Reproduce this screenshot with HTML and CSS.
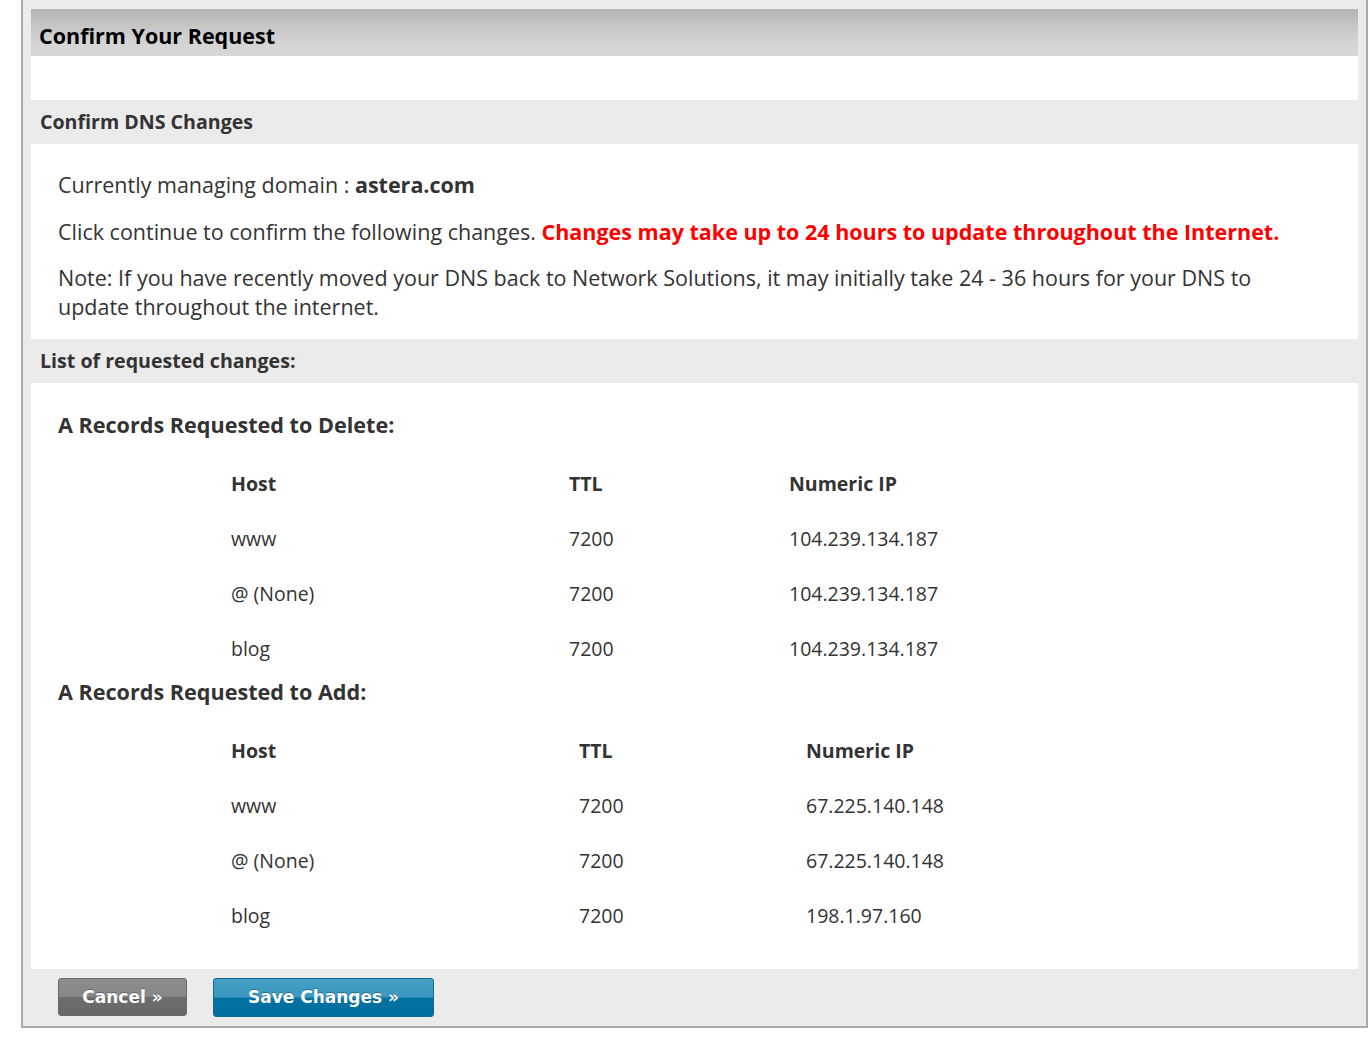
FILE: index.html
```html
<!DOCTYPE html>
<html lang="en">
<head>
<meta charset="utf-8">
<title>Confirm Your Request</title>
<link rel="stylesheet" href="styles.css">
</head>
<body>
<div class="frame">
  <div class="panel">
    <div class="title">Confirm Your Request</div>
    <div class="spacer"></div>
    <div class="bar">Confirm DNS Changes</div>
    <div class="content intro">
      <p>Currently managing domain : <b>astera.com</b></p>
      <p>Click continue to confirm the following changes. <b class="warn">Changes may take up to 24 hours to update throughout the Internet.</b></p>
      <p>Note: If you have recently moved your DNS back to Network Solutions, it may initially take 24 - 36 hours for your DNS to update throughout the internet.</p>
    </div>
    <div class="bar">List of requested changes:</div>
    <div class="content changes">
      <h3 class="rec-title rec-title-first">A Records Requested to Delete:</h3>
      <div class="records rec-del">
        <div class="cell head">Host</div><div class="cell head">TTL</div><div class="cell head">Numeric IP</div>
        <div class="cell">www</div><div class="cell">7200</div><div class="cell">104.239.134.187</div>
        <div class="cell">@ (None)</div><div class="cell">7200</div><div class="cell">104.239.134.187</div>
        <div class="cell">blog</div><div class="cell">7200</div><div class="cell">104.239.134.187</div>
      </div>
      <h3 class="rec-title">A Records Requested to Add:</h3>
      <div class="records rec-add">
        <div class="cell head">Host</div><div class="cell head">TTL</div><div class="cell head">Numeric IP</div>
        <div class="cell">www</div><div class="cell">7200</div><div class="cell">67.225.140.148</div>
        <div class="cell">@ (None)</div><div class="cell">7200</div><div class="cell">67.225.140.148</div>
        <div class="cell">blog</div><div class="cell">7200</div><div class="cell">198.1.97.160</div>
      </div>
    </div>
  </div>
  <div class="footer">
    <button class="btn btn-cancel" type="button">Cancel &raquo;</button>
    <button class="btn btn-save" type="button">Save Changes &raquo;</button>
  </div>
</div>
</body>
</html>
```

FILE: styles.css
```css
html, body {
  margin: 0;
  padding: 0;
  background: #ffffff;
}

body {
  font-family: "Open Sans", "Liberation Sans", sans-serif;
  color: #333333;
}

.frame {
  box-sizing: border-box;
  width: 1347px;
  margin-left: 21px;
  border: 2px solid #aaaaaa;
  border-top: 0;
  background: #ebebeb;
  padding: 9px 8px 0 8px;
}

.panel {
  background: #ffffff;
}

.title {
  height: 47px;
  box-sizing: border-box;
  padding: 6px 0 0 8px;
  line-height: 41px;
  font-size: 21.5px;
  font-weight: 700;
  color: #000000;
  background: linear-gradient(#b3b3b3 0%, #c8c8c8 40%, #d5d5d5 75%, #d6d6d6 100%);
}

.spacer {
  height: 44px;
}

.bar {
  height: 44px;
  line-height: 44px;
  margin-right: -8px;
  padding-left: 9px;
  background: #ebebeb;
  font-size: 19.6px;
  font-weight: 700;
  color: #333333;
}

.content {
  padding: 0 27px;
}

.intro {
  padding-top: 26px;
  padding-right: 60px;
  padding-bottom: 0.5px;
}

.intro p {
  margin: 0 0 17px 0;
  font-size: 21.5px;
  line-height: 29px;
  color: #333333;
}

.intro p:first-child {
  margin-bottom: 18px;
}

.intro b {
  font-weight: 700;
}

.intro .warn {
  color: #ff0000;
}

.changes {
  padding-top: 28px;
  padding-bottom: 26px;
}

.rec-title {
  margin: 0 0 17px 0;
  font-size: 21.6px;
  line-height: 29px;
  font-weight: 700;
  color: #333333;
}

.rec-title-first {
  margin-top: -1px;
  margin-bottom: 17px;
}

.records {
  display: grid;
  margin-left: 173px;
  font-size: 19.5px;
}

.rec-del {
  grid-template-columns: 338px 220px auto;
  margin-bottom: 1px;
}

.rec-add {
  grid-template-columns: 348px 227px auto;
}

.cell {
  height: 55px;
  line-height: 55px;
  white-space: nowrap;
  color: #333333;
}

.cell.head {
  font-weight: 700;
}

.footer {
  height: 57px;
  box-sizing: border-box;
  padding: 9px 0 0 27px;
  display: flex;
  align-items: flex-start;
  gap: 26px;
}

.btn {
  box-sizing: border-box;
  height: 38px;
  padding: 0;
  margin: 0;
  border-radius: 3px;
  font-family: "DejaVu Sans", Verdana, sans-serif;
  font-size: 17px;
  font-weight: 700;
  color: #ffffff;
  text-shadow: 0 -1px 0 rgba(0, 0, 0, 0.3);
  cursor: pointer;
}

.btn-cancel {
  width: 129px;
  border: 1px solid #6a6a6a;
  background: linear-gradient(#8c8c8c 0%, #888888 48%, #6c6c6c 52%, #696969 100%);
}

.btn-save {
  width: 221px;
  height: 39px;
  border: 1px solid #0d6a93;
  background: linear-gradient(#43a0c4 0%, #3d98bf 48%, #0473a3 52%, #006fa0 100%);
}
```
